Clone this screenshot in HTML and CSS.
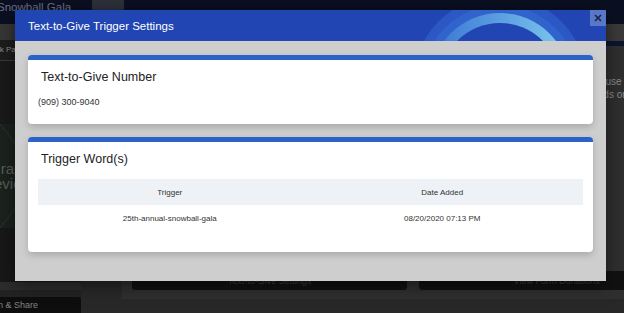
FILE: index.html
```html
<!DOCTYPE html>
<html lang="en">
<head>
  <meta charset="UTF-8" />
  <title>Text-to-Give Trigger Settings</title>
  <meta name="viewport" content="width=device-width, initial-scale=1" />
  <link rel="stylesheet" href="styles.css">
</head>
<body>
  <div class="page">
    <header class="topnav">
      <span class="event-name">Snowball Gala</span>
      <span class="nav-tab"></span>
    </header>
    <div class="workspace">
      <aside class="sidebar">
        <div class="side-tools"></div>
        <div class="side-link">Back Page</div>
        <div class="side-gap"></div>
        <div class="preview-thumb">
          <span class="thumb-line first">Graphic</span>
          <span class="thumb-line second">Preview</span>
        </div>
        <div class="side-fill"></div>
        <div class="side-band"></div>
        <div class="side-band dark"></div>
        <button class="side-btn">Design &amp; Share</button>
      </aside>
      <main class="main">
        <div class="toolbar"></div>
        <div class="toolbar-line"></div>
        <div class="content">
          <section class="panel">
            <div class="panel-note">
              <div>ause custom words</div>
              <div>rds only when</div>
            </div>
            <div class="panel-actions">
              <button class="panel-btn">Text-to-Give Settings</button>
              <button class="panel-btn">View Form Donations</button>
            </div>
          </section>
        </div>
      </main>
    </div>
  </div>

  <div class="modal">
    <div class="modal-header">
      <svg class="header-rings" width="591" height="31" viewBox="0 0 591 31">
        <defs>
          <linearGradient id="ringGlow" x1="0" y1="0" x2="1" y2="0">
            <stop offset="0" stop-color="#3873d2" />
            <stop offset="1" stop-color="#7fcaef" />
          </linearGradient>
        </defs>
        <circle cx="485" cy="73" r="87" fill="#2b58c4" />
        <circle cx="485" cy="73" r="78" fill="#3163cc" />
        <circle cx="485" cy="73" r="70" fill="url(#ringGlow)" />
        <circle cx="485" cy="73" r="60" fill="#2145b3" />
      </svg>
      <h1 class="modal-title">Text-to-Give Trigger Settings</h1>
      <button class="modal-close" aria-label="Close">
        <svg width="8" height="8" viewBox="0 0 8 8">
          <path d="M1 1 L7 7 M7 1 L1 7" stroke="#1b2140" stroke-width="1.6" />
        </svg>
      </button>
    </div>
    <div class="modal-body">
      <div class="card">
        <h2 class="card-title">Text-to-Give Number</h2>
        <p class="card-text">(909) 300-9040</p>
      </div>
      <div class="card trigger-card">
        <h2 class="card-title">Trigger Word(s)</h2>
        <table class="trigger-table">
          <thead>
            <tr><th>Trigger</th><th>Date Added</th></tr>
          </thead>
          <tbody>
            <tr><td>25th-annual-snowball-gala</td><td>08/20/2020 07:13 PM</td></tr>
          </tbody>
        </table>
      </div>
    </div>
  </div>
</body>
</html>
```

FILE: styles.css
```css
* { box-sizing: border-box; }
html, body { margin: 0; }
body {
  width: 624px;
  height: 313px;
  overflow: hidden;
  position: relative;
  font-family: "Liberation Sans", Arial, sans-serif;
  background: #272727;
}

/* page behind the dialog */
.page {
  display: flex;
  flex-direction: column;
  height: 313px;
}
.topnav {
  height: 24px;
  flex-shrink: 0;
  background: #0a1022;
  display: flex;
  align-items: flex-start;
  gap: 21px;
}
.event-name {
  margin-left: -3px;
  font-size: 11.5px;
  line-height: 14px;
  color: #6c7283;
  white-space: nowrap;
}
.nav-tab {
  width: 32px;
  height: 22px;
  background: #2c3039;
}
.workspace {
  flex: 1;
  display: flex;
  min-height: 0;
}
.sidebar {
  width: 81px;
  flex-shrink: 0;
  display: flex;
  flex-direction: column;
  background: #1a1a1a;
  overflow: hidden;
}
.side-tools { height: 16px; background: #363636; }
.side-link {
  height: 21px;
  border-bottom: 1px solid #3a3a3a;
  background: #1d1d1d;
  font-size: 8px;
  line-height: 20px;
  color: #8d8d8d;
  text-indent: -14px;
  white-space: nowrap;
}
.side-gap { height: 63px; }
.preview-thumb {
  height: 104px;
  padding-top: 37px;
  font-size: 15px;
  line-height: 15px;
  color: #55605a;
  background:
    linear-gradient(to top right, transparent calc(50% - 1px), #26302a 50%, transparent calc(50% + 1px)),
    linear-gradient(to bottom right, transparent calc(50% - 1px), #26302a 50%, transparent calc(50% + 1px)),
    #1c221d;
}
.thumb-line { display: block; white-space: nowrap; }
.thumb-line.first { margin-left: -11px; }
.thumb-line.second { margin-left: -21px; }
.side-fill { flex: 1; background: #181818; }
.side-band { height: 8px; background: #2d2d2d; }
.side-band.dark { height: 7px; background: #232323; }
.side-btn {
  height: 16px;
  padding: 0;
  border: none;
  border-radius: 0 3px 0 0;
  background: #0e0e0e;
  font: inherit;
  font-size: 9px;
  color: #858585;
  text-align: left;
  text-indent: -25px;
  white-space: nowrap;
  overflow: hidden;
}
.main {
  flex: 1;
  min-width: 0;
  display: flex;
  flex-direction: column;
}
.toolbar { height: 17px; background: #3a3a3a; }
.toolbar-line { height: 5px; background: #0c1530; }
.content {
  flex: 1;
  display: flex;
  padding: 0 0 14px 41px;
  background: #282828;
}
.panel {
  flex: 1;
  display: flex;
  flex-direction: column;
  padding: 29px 0 9px 10px;
  background: #2f2f2f;
  overflow: hidden;
}
.panel-note {
  padding-left: 468px;
  font-size: 10px;
  line-height: 13px;
  color: #8a8a8a;
  white-space: nowrap;
}
.panel-actions {
  margin-top: auto;
  display: flex;
  gap: 12px;
}
.panel-btn {
  flex-shrink: 0;
  width: 275px;
  height: 19px;
  border: none;
  border-radius: 3px;
  background: #111;
  font: inherit;
  font-size: 9px;
  color: #3d3d3d;
}

/* dialog */
.modal {
  position: absolute;
  left: 15px;
  top: 10px;
  width: 591px;
  height: 271px;
  display: flex;
  flex-direction: column;
  box-shadow: 0 4px 16px rgba(0, 0, 0, 0.5);
}
.modal-header {
  position: relative;
  height: 31px;
  flex-shrink: 0;
  display: flex;
  align-items: center;
  padding-left: 13px;
  background: #2145b3;
  overflow: hidden;
}
.header-rings { position: absolute; left: 0; top: 0; }
.modal-title {
  position: relative;
  margin: 0;
  font-size: 11.5px;
  font-weight: normal;
  color: #fff;
}
.modal-close {
  position: absolute;
  top: 0;
  right: 0;
  width: 16px;
  height: 16px;
  padding: 0;
  border: none;
  background: #5877c9;
  display: flex;
  align-items: center;
  justify-content: center;
}
.modal-body {
  flex: 1;
  display: flex;
  flex-direction: column;
  gap: 13px;
  padding: 14px 13px 29px;
  background: #cecece;
}
.card {
  background: #fff;
  border-top: 5px solid #2c63c9;
  border-radius: 4px;
  padding: 10px 10px 16px;
  box-shadow: 0 3px 7px rgba(0, 0, 0, 0.18);
}
.trigger-card { padding-bottom: 21px; }
.card-title {
  margin: 0;
  padding-left: 3px;
  font-size: 12.5px;
  line-height: 15px;
  font-weight: normal;
  color: #222;
}
.card-text {
  margin: 12px 0 0;
  font-size: 9px;
  line-height: 11px;
  color: #333;
}
.trigger-table {
  width: 100%;
  margin-top: 12px;
  border-collapse: collapse;
  font-size: 8px;
  color: #333;
}
.trigger-table th,
.trigger-table td {
  height: 26px;
  width: 50%;
  padding: 0 9px 0 0;
  text-align: center;
  font-weight: normal;
}
.trigger-table thead tr { background: #eef1f6; }
```
